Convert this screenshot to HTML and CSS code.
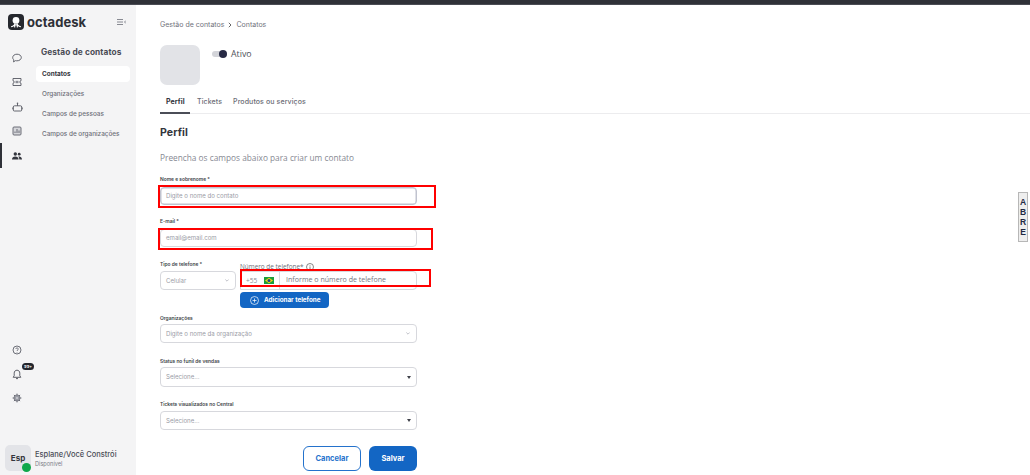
FILE: index.html
```html
<!DOCTYPE html>
<html lang="pt-BR">
<head>
<meta charset="utf-8">
<title>Octadesk - Contatos</title>
<link rel="stylesheet" href="styles.css">
</head>
<body>
<div class="topbar"></div>
<div class="app">
  <aside class="sidebar">
    <div class="brand">
      <span class="logo">
        <svg viewBox="0 0 16 16" width="16" height="16"><rect width="16" height="16" rx="4" fill="#26282e"/><circle cx="8" cy="6.4" r="3.400" fill="#fff"/><path d="M3.600 12.600c1.600 0 2.200-1.200 3-1.800h2.800c.8.600 1.400 1.800 3 1.800M6.700 10v3M9.300 10v3" fill="none" stroke="#fff" stroke-width="1.200" stroke-linecap="round"/></svg>
      </span>
      <span class="brand-name">octadesk</span>
      <svg class="collapse" viewBox="0 0 9 6" width="9" height="6"><path d="M0 .5h6M0 3h6M0 5.500h6M9 1.500 7.500 3 9 4.500" fill="none" stroke="#6c6e78" stroke-width=".8"/></svg>
    </div>
    <div class="side-body">
      <nav class="rail">
        <div class="rail-top">
          <span class="rail-item"><svg viewBox="0 0 10 10" width="10" height="10"><path d="M5 1.200c2.400 0 4.300 1.400 4.300 3.300S7.400 7.800 5 7.800c-.5 0-1 0-1.400-.2L1.500 8.900l.4-2C1 6.300.7 5.400.7 4.500.7 2.600 2.600 1.200 5 1.200Z" fill="none" stroke="#565862" stroke-width=".9"/></svg></span>
          <span class="rail-item"><svg viewBox="0 0 10 10" width="10" height="10"><path d="M1 1.500h8v2.300a1.200 1.200 0 0 0 0 2.400v2.300H1V6.200a1.200 1.200 0 0 0 0-2.400Z" fill="none" stroke="#565862" stroke-width=".9"/><rect x="3.500" y="3.800" width="3" height="2.400" fill="#8b8d96"/></svg></span>
          <span class="rail-item"><svg viewBox="0 0 11 10" width="11" height="10"><path d="M2.500 3.800h6a1.200 1.200 0 0 1 1.200 1.200v3a1 1 0 0 1-1 1H2.300a1 1 0 0 1-1-1V5a1.200 1.200 0 0 1 1.200-1.200ZM5.500 3.800V1.600" fill="none" stroke="#565862" stroke-width=".9"/><circle cx="5.500" cy="1.300" r=".8" fill="#565862"/><path d="M1.200 5.500H.4v1.800h.8M9.800 5.500h.8v1.800h-.8" fill="#565862"/></svg></span>
          <span class="rail-item"><svg viewBox="0 0 10 10" width="10" height="10"><rect x="1" y="1" width="8" height="8" rx="1" fill="#d5d6da" stroke="#5f616b" stroke-width=".9"/><path d="M3 7V5.500M5 7V3M7 7V4.500" stroke="#5f616b" stroke-width=".9"/></svg></span>
          <span class="rail-item active"><svg viewBox="0 0 10 8" width="10" height="8"><circle cx="3.300" cy="2" r="1.700" fill="#34363e"/><circle cx="7.200" cy="2.200" r="1.400" fill="#34363e"/><path d="M0 7.500c0-2 1.400-3 3.300-3s3.300 1 3.300 3ZM7.300 7.500c0-1.200-.3-2.100-1-2.900 1.800-.4 3.700.6 3.700 2.900Z" fill="#34363e"/></svg></span>
        </div>
        <div class="rail-bottom">
          <span class="rail-item"><svg viewBox="0 0 10 10" width="10" height="10"><circle cx="5" cy="5" r="4" fill="none" stroke="#5f616b" stroke-width=".9"/><path d="M3.800 4c0-1.600 2.500-1.500 2.500 0 0 1-1.300 1-1.300 2M5 7v.6" fill="none" stroke="#5f616b" stroke-width=".8"/></svg></span>
          <span class="rail-item bell"><svg viewBox="0 0 10 11" width="10" height="11"><path d="M5 1.200c-1.800 0-2.800 1.300-2.800 3v2.500L1.200 8.300h7.600l-1-1.600V4.200c0-1.700-1-3-2.800-3ZM4 9.600h2" fill="none" stroke="#4d4f59" stroke-width=".9"/></svg><span class="badge">99+</span></span>
          <span class="rail-item"><svg viewBox="0 0 10 10" width="10" height="10"><circle cx="5" cy="5" r="3.100" fill="#9a9ca5" stroke="#6a6c76" stroke-width=".7"/><path d="M5 .6v1.500M5 7.900v1.500M.6 5h1.500M7.900 5h1.500M1.900 1.900 3 3M7 7l1.100 1.100M8.100 1.900 7 3M3 7 1.900 8.100" stroke="#6a6c76" stroke-width="1"/><circle cx="5" cy="5" r="1.100" fill="#c9cad0"/></svg></span>
        </div>
      </nav>
      <div class="submenu">
        <h2 class="submenu-title">Gestão de contatos</h2>
        <a class="submenu-item current">Contatos</a>
        <a class="submenu-item">Organizações</a>
        <a class="submenu-item">Campos de pessoas</a>
        <a class="submenu-item">Campos de organizações</a>
      </div>
    </div>
    <div class="user">
      <span class="avatar">Esp<i class="status"></i></span>
      <span class="user-text">
        <span class="user-name">Esplane/Você Constrói</span>
        <span class="user-state">Disponível</span>
      </span>
    </div>
  </aside>

  <main class="content">
    <div class="crumbs"><span>Gestão de contatos</span><svg viewBox="0 0 4 6" width="4" height="6"><path d="M.8.8 3 3 .8 5.200" fill="none" stroke="#555" stroke-width=".9"/></svg><span>Contatos</span></div>
    <div class="head">
      <div class="photo"></div>
      <div class="active-toggle"><span class="toggle"><i class="knob"></i></span><span>Ativo</span></div>
    </div>
    <div class="tabs">
      <span class="tab selected">Perfil</span>
      <span class="tab">Tickets</span>
      <span class="tab">Produtos ou serviços</span>
    </div>
    <h1 class="title">Perfil</h1>
    <p class="intro">Preencha os campos abaixo para criar um contato</p>

    <form class="form">
      <div class="field f-name">
        <label class="label">Nome e sobrenome *</label>
        <div class="input focus">Digite o nome do contato</div>
      </div>
      <div class="field f-mail">
        <label class="label">E-mail *</label>
        <div class="input">email@email.com</div>
      </div>
      <div class="phone-row">
        <div class="phone-type">
          <label class="label">Tipo de telefone *</label>
          <div class="input select"><span>Celular</span><svg class="chev" viewBox="0 0 6 4" width="4" height="3"><path d="M.5.5 3 3 5.500.5" fill="none" stroke="#a2a4ad" stroke-width="1"/></svg></div>
        </div>
        <div class="phone-num">
          <label class="label-num">Número de telefone* <svg viewBox="0 0 8 8" width="8" height="8"><circle cx="4" cy="4" r="3.500" fill="none" stroke="#555" stroke-width=".7"/><path d="M4 3.400V6M4 2v.7" stroke="#555" stroke-width=".7"/></svg></label>
          <div class="input phone">
            <span class="ddi">+55</span>
            <svg class="flag" viewBox="0 0 10 7" width="10" height="7"><rect width="10" height="7" fill="#1c9c3b"/><path d="M5 .8 9 3.500 5 6.200 1 3.500Z" fill="#f4d90f"/><circle cx="5" cy="3.500" r="1.500" fill="#1d3f8f"/></svg>
            <span class="phone-ph">Informe o número de telefone</span>
          </div>
          <button type="button" class="add-btn"><svg viewBox="0 0 9 9" width="9" height="9"><circle cx="4.500" cy="4.500" r="4" fill="none" stroke="#fff" stroke-width=".7"/><path d="M4.500 2.500v4M2.500 4.500h4" stroke="#fff" stroke-width=".7"/></svg>Adicionar telefone</button>
        </div>
      </div>
      <div class="field f-org">
        <label class="label">Organizações</label>
        <div class="input select"><span>Digite o nome da organização</span><svg class="chev" viewBox="0 0 6 4" width="4" height="3"><path d="M.5.5 3 3 5.500.5" fill="none" stroke="#a2a4ad" stroke-width="1"/></svg></div>
      </div>
      <div class="field f-status">
        <label class="label">Status no funil de vendas</label>
        <div class="input select tall"><span>Selecione...</span><i class="caret"></i></div>
      </div>
      <div class="field f-tickets">
        <label class="label">Tickets visualizados no Central</label>
        <div class="input select"><span>Selecione...</span><i class="caret"></i></div>
      </div>
      <div class="actions">
        <button type="button" class="btn cancel">Cancelar</button>
        <button type="button" class="btn save">Salvar</button>
      </div>
    </form>
  </main>
</div>

<div class="mark mark-name"></div>
<div class="mark mark-mail"></div>
<div class="mark mark-phone"></div>
<div class="abre"><span>A</span><span>B</span><span>R</span><span>E</span></div>
<div class="scroll"></div>
</body>
</html>
```
FILE: styles.css
```css
* { box-sizing: border-box; }
html, body { margin: 0; height: 475px; overflow: hidden; background: #fff; }
body { font-family: "Inter", "Liberation Sans", sans-serif; color: #3a3c45; position: relative; }

.topbar { height: 5px; background: #2f3138; border-bottom: 1px solid #4a4c54; }
.app { display: flex; height: 470px; }

.sidebar { width: 136px; flex: none; background: #f4f4f5; display: flex; flex-direction: column; }
.brand { height: 34px; padding: 9px 0 0 8px; display: flex; align-items: flex-start; }
.logo { width: 16px; height: 16px; display: block; }
.logo svg { display: block; }
.brand-name { font: 700 13px/16px "Inter", sans-serif; color: #2e3037; margin-left: 3px; width: 96px; letter-spacing: .05px; }
.collapse { margin-top: 5px; margin-left: -6px; }

.side-body { flex: 1; display: flex; min-height: 0; }
.rail { width: 34px; flex: none; display: flex; flex-direction: column; justify-content: space-between; padding: 7px 0 31px; }
.rail-top, .rail-bottom { display: flex; flex-direction: column; }
.rail-item { height: 24.300px; display: flex; align-items: center; padding-left: 12px; position: relative; }
.rail-item.active { border-left: 2px solid #2f3138; padding-left: 10px; height: 25px; }
.rail-item svg { display: block; }
.rail-bottom .rail-item { height: 24px; }
.badge { position: absolute; left: 22px; top: 1px; width: 12px; height: 7px; border-radius: 4px; background: #23252c; color: #fff; font: 700 4px/7px "Inter", sans-serif; text-align: center; }

.submenu { flex: 1; padding-left: 2px; }
.submenu-title { margin: 7px 0 8px 5px; font: 700 8.300px/12px "Inter", sans-serif; color: #4a4c55; letter-spacing: .1px; }
.submenu-item { display: block; width: 94px; height: 16px; margin-bottom: 4px; padding-left: 6px; font: 500 6.400px/16px "Inter", sans-serif; color: #6d6f78; border-radius: 4px; white-space: nowrap; }
.submenu-item.current { background: #fff; color: #33353c; font-weight: 700; }

.user { height: 34px; padding: 4px 0 0 5px; display: flex; gap: 4px; }
.avatar { width: 26px; height: 26px; position: relative; border-radius: 5px; background: #e3e4e8; font: 700 8px/26px "Inter", sans-serif; color: #33353c; text-align: center; }
.status { position: absolute; left: 17px; top: 18px; width: 9px; height: 9px; border-radius: 50%; background: #0fa84a; }
.user-text { display: flex; flex-direction: column; padding-top: 4px; }
.user-name { font: 500 7.500px/11px "Inter", sans-serif; color: #4b4d57; white-space: nowrap; }
.user-state { font: 400 5.600px/8px "Inter", sans-serif; color: #7b7d86; }

.content { flex: 1; padding: 15px 0 0 24px; min-width: 0; }
.crumbs { display: flex; align-items: center; gap: 4px; font: 400 7px/10px "Inter", sans-serif; color: #71737c; }
.head { display: flex; margin-top: 15px; }
.photo { width: 40px; height: 40px; border-radius: 7px; background: #e2e3e7; }
.active-toggle { margin-left: 12px; display: flex; align-items: center; gap: 4px; height: 10px; margin-top: 4px; font: 400 8.800px/10px "Open Sans", sans-serif; color: #4f515a; }
.toggle { width: 15px; height: 6px; border-radius: 3px; background: #d3d4d9; position: relative; }
.knob { position: absolute; right: 0; top: -1px; width: 8px; height: 8px; border-radius: 50%; background: #272a45; }

.tabs { display: flex; margin-top: 8px; height: 21px; border-bottom: 1px solid #ececee; width: 870px; font: 500 7px/18px "Inter", sans-serif; color: #6a6c75; }
.tab { height: 21px; letter-spacing: .1px; white-space: nowrap; margin-right: 5px; margin-left: 6px; }
.tab.selected { width: 30px; margin: 0; padding: 0 6px; color: #33353c; font-weight: 700; border-bottom: 2px solid #4b4d57; letter-spacing: .05px; }
.tab.selected + .tab { margin-left: 7px; }

.title { margin: 12px 0 0; font: 700 10.500px/14px "Inter", sans-serif; color: #33353c; letter-spacing: .1px; }
.intro { margin: 12px 0 0; font: 400 8.300px/12px "Open Sans", sans-serif; color: #868892; }

.form { width: 257px; margin-top: 12px; }
.field { display: block; }
.label { display: block; height: 7px; font: 600 4.900px/7px "Inter", sans-serif; color: #3d3f48; white-space: nowrap; }
.input { height: 18px; margin-top: 4px; padding-left: 5px; border: 1px solid #d7d8dd; border-radius: 4px; background: #fff; font: 400 6.100px/16px "Inter", sans-serif; color: #9a9ca6; }
.input.focus { border: 1px solid #c0c3cf; box-shadow: inset 0 0 0 .5px #c0c3cf; }
.select { display: flex; align-items: center; justify-content: space-between; padding-right: 4px; height: 19px; }
.select.tall { height: 20px; }
.chev { display: block; margin-right: 2px; }
.caret { width: 0; height: 0; border: 2.500px solid transparent; border-top: 3px solid #3f414a; border-bottom: 0; margin-right: 1px; }

.f-mail { margin-top: 13px; }
.phone-row { display: flex; gap: 4px; margin-top: 14px; }
.phone-type { width: 76px; flex: none; }
.phone-type .input { margin-top: 3px; }
.phone-num { flex: 1; position: relative; }
.label-num { display: flex; align-items: center; gap: 2px; height: 9px; margin-top: 1px; margin-bottom: -1px; font: 400 6.400px/9px "Open Sans", sans-serif; color: #6c6e78; white-space: nowrap; }
.phone { display: flex; align-items: center; height: 19px; margin-top: 1px; padding-left: 5px; border-radius: 0 4px 4px 0; }
.ddi { font: 400 6.500px/15px "Open Sans", sans-serif; color: #8a8c96; width: 18px; }
.flag { display: block; margin-top: -1px; }
.phone-ph { border-left: 1px solid #dcdde1; height: 17px; margin-left: 5px; padding-left: 6px; font: 400 7.100px/15px "Open Sans", sans-serif; color: #74767f; white-space: nowrap; }
.add-btn { display: flex; align-items: center; gap: 5px; width: 89px; height: 16px; margin-top: 2px; padding: 0 0 0 10px; border: 0; border-radius: 4px; background: #1366c4; color: #fff; font: 700 6.300px/16px "Inter", sans-serif; white-space: nowrap; }

.f-org { margin-top: 7px; }
.f-org .input { margin-top: 2px; }
.f-status { margin-top: 15px; }
.f-status .input { margin-top: 2px; }
.f-tickets { margin-top: 14px; }
.f-tickets .input { margin-top: 3px; }
.actions { display: flex; justify-content: flex-end; gap: 8px; margin-top: 16px; }
.btn { height: 25px; border-radius: 6px; font: 700 7.500px/23px "Inter", sans-serif; padding: 0; }
.cancel { width: 58px; background: #fff; border: 1px solid #2472cc; color: #2472cc; }
.save { width: 48px; background: #1366c4; border: 0; color: #fff; }

.mark { position: absolute; border: 2px solid #f00; }
.mark-name { left: 158px; top: 185px; width: 278px; height: 23px; }
.mark-mail { left: 158px; top: 228px; width: 275px; height: 22px; }
.mark-phone { left: 240px; top: 269px; width: 191px; height: 18px; }

.abre { position: absolute; left: 1018px; top: 192px; width: 10px; height: 50px; border: 1px solid #b7b7b7; background: #eee; display: flex; flex-direction: column; align-items: center; justify-content: center; font: 700 8.500px/10px "Liberation Sans", sans-serif; color: #1f2a44; }
.scroll { position: absolute; right: 0; top: 5px; width: 3px; height: 470px; background: #f1f1f2; z-index: -1; }
```
